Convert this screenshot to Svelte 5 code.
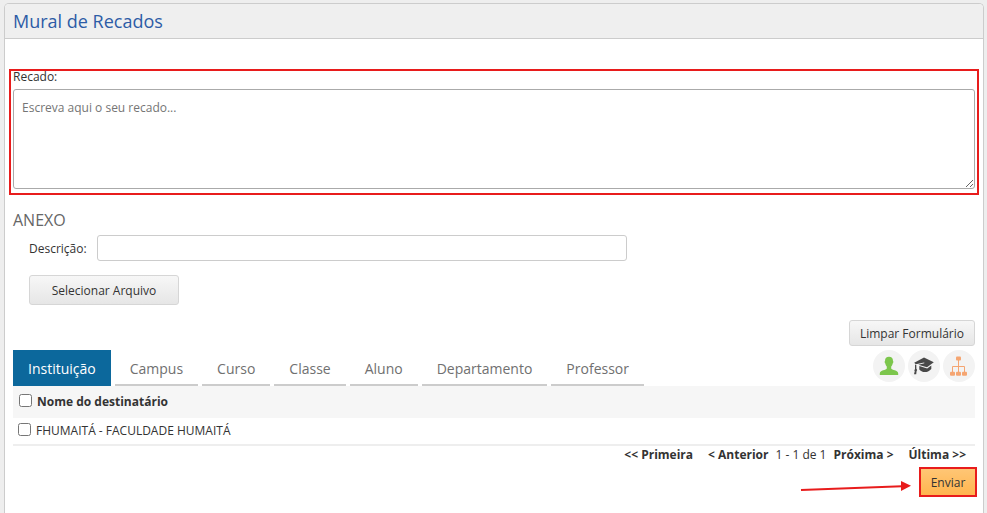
<script lang="ts">
  const tabs = ['Instituição', 'Campus', 'Curso', 'Classe', 'Aluno', 'Departamento', 'Professor'];
  const recipients = ['FHUMAITÁ - FACULDADE HUMAITÁ'];

  let active = $state('Instituição');
  let message = $state('');
  let description = $state('');
  let selected = $state<string[]>([]);

  let allSelected = $derived(selected.length === recipients.length);

  function toggleAll() {
    selected = allSelected ? [] : [...recipients];
  }

  function clearForm() {
    message = '';
    description = '';
    selected = [];
  }
</script>

<main>
  <section class="panel">
    <header>
      <h1>Mural de Recados</h1>
    </header>

    <div class="content">
      <div class="message">
        <label for="message">Recado:</label>
        <textarea id="message" placeholder="Escreva aqui o seu recado..." bind:value={message}></textarea>
      </div>

      <h2>ANEXO</h2>
      <div class="attachment">
        <div class="description">
          <label for="description">Descrição:</label>
          <input type="text" id="description" bind:value={description} />
        </div>
        <button type="button" class="btn file">Selecionar Arquivo</button>
      </div>

      <div class="actions">
        <button type="button" class="btn" onclick={clearForm}>Limpar Formulário</button>
      </div>

      <div class="toolbar">
        <nav class="tabs">
          {#each tabs as tab}
            <button type="button" class="tab" class:active={active === tab} onclick={() => (active = tab)}>{tab}</button>
          {/each}
        </nav>
        <div class="shortcuts">
          <button type="button" class="round" aria-label="Alunos">
            <svg width="32" height="32" viewBox="0 0 32 32" fill="#7cc64c">
              <path d="M12 11c0-2.800 1.500-4.200 4-4.200s4 1.400 4 4.200c.5.200.5 1.600-.2 2.200-.3 1.600-1 2.500-1.600 3.200v2.200c.4 1.500 7 1.800 7 4.800v1.600H6.800v-1.600c0-3 6.600-3.300 7-4.800v-2.200c-.6-.7-1.300-1.600-1.600-3.200-.7-.6-.7-2-.2-2.200z" />
            </svg>
          </button>
          <button type="button" class="round" aria-label="Professores">
            <svg width="32" height="32" viewBox="0 0 32 32" fill="#484848">
              <path d="M16 7.600 25.800 12.300 19 17.300 10.300 14.700 16.400 13.200 16.200 12.400 7.800 14.300 6.200 12.800z" />
              <path d="M11.300 15.900l7.900 2.500 4.100-3v3.500c-2.600 2.500-4.400 3.300-6.500 3.200-2.400-.1-4.300-1-5.500-2.600z" />
              <path d="M7 14.400l1.300.5.100 4.200c1 .6.900 1.600.2 2l-.4 3.100H6l.8-3.100c-.7-.6-.5-1.400.2-1.900z" />
            </svg>
          </button>
          <button type="button" class="round" aria-label="Departamentos">
            <svg width="32" height="32" viewBox="0 0 32 32" fill="#f5a571">
              <path d="M9.500 22v-5.500h12v5.500M15.500 9v13" fill="none" stroke="#f5a571" />
              <rect x="13" y="6.500" width="5" height="4" rx="1" />
              <rect x="7" y="21.800" width="5" height="4" rx="1" />
              <rect x="13" y="21.800" width="5" height="4" rx="1" />
              <rect x="19" y="21.800" width="5" height="4" rx="1" />
            </svg>
          </button>
        </div>
      </div>

      <table>
        <thead>
          <tr>
            <th>
              <label>
                <input type="checkbox" checked={allSelected} onchange={toggleAll} />
                Nome do destinatário
              </label>
            </th>
          </tr>
        </thead>
        <tbody>
          {#each recipients as recipient}
            <tr>
              <td>
                <label>
                  <input type="checkbox" value={recipient} bind:group={selected} />
                  {recipient}
                </label>
              </td>
            </tr>
          {/each}
        </tbody>
      </table>

      <nav class="pager">
        <a href="#primeira" class="edge">&lt;&lt; Primeira</a>
        <a href="#anterior">&lt; Anterior</a>
        <span>1 - 1 de 1</span>
        <a href="#proxima">Próxima &gt;</a>
        <a href="#ultima" class="last">Última &gt;&gt;</a>
      </nav>

      <div class="submit">
        <svg class="arrow" width="112" height="22" viewBox="0 0 112 22" aria-hidden="true">
          <path d="M1 19 102 15.200" stroke="#e81c1c" stroke-width="2" fill="none" />
          <path d="M101 10 111 14.700 101 20z" fill="#e81c1c" />
        </svg>
        <button type="submit" class="send">Enviar</button>
      </div>
    </div>
  </section>
</main>

<style>
  :global(body) {
    margin: 0;
    background: #eee;
    color: #333;
    font: 12px/16px "Segoe UI", "Open Sans", "Noto Sans", sans-serif;
  }

  main {
    display: flex;
    box-sizing: border-box;
    min-height: 100vh;
    padding: 3px 3px 0 4px;
  }

  .panel {
    flex: 1;
    border: 1px solid #ccc;
    border-bottom: none;
    border-radius: 5px 5px 0 0;
    background: #fff;
  }

  header {
    padding: 0 8px;
    border-bottom: 1px solid #ccc;
    border-radius: 4px 4px 0 0;
    background: #efefef;
  }

  h1 {
    margin: 0;
    color: #2d5ca6;
    font-size: 18px;
    font-weight: 400;
    line-height: 34px;
  }

  .content {
    padding: 30px 8px 16px;
  }

  button,
  input,
  textarea {
    box-sizing: border-box;
    color: inherit;
    font: inherit;
  }

  button {
    cursor: pointer;
  }

  .message {
    position: relative;
  }

  .message::after {
    position: absolute;
    inset: 0 -4px -6px;
    border: 2px solid #e81c1c;
    content: '';
    pointer-events: none;
  }

  .message label {
    display: block;
    margin-bottom: 4px;
  }

  textarea {
    display: block;
    width: 100%;
    height: 100px;
    padding: 10px 8px;
    border: 1px solid #aaa;
    border-radius: 3px;
  }

  textarea::placeholder {
    color: #757575;
  }

  h2 {
    margin: 21px 0 5px;
    color: #666;
    font-size: 16px;
    font-weight: 400;
    line-height: 20px;
  }

  .attachment {
    padding-left: 16px;
  }

  .description {
    display: flex;
    align-items: center;
    margin-bottom: 14px;
  }

  .description label {
    width: 68px;
    padding-top: 2px;
  }

  .description input {
    width: 530px;
    height: 26px;
    border: 1px solid #ccc;
    border-radius: 3px;
  }

  .btn {
    height: 26px;
    padding: 2px 10px 0;
    border: 1px solid #d6d6d6;
    border-radius: 3px;
    background: linear-gradient(#f7f7f7, #e6e6e6);
  }

  .file {
    width: 150px;
    height: 30px;
  }

  .actions {
    display: flex;
    justify-content: flex-end;
    margin: 15px 0 4px;
  }

  .toolbar {
    display: flex;
    justify-content: space-between;
  }

  .tabs {
    display: flex;
    gap: 4px;
  }

  .tab {
    height: 36px;
    padding: 3px 15px 0;
    border: none;
    border-bottom: 2px solid #ccc;
    background: none;
    color: #707070;
    font-size: 14px;
  }

  .tab.active {
    border-color: #0c689c;
    background: #0c689c;
    color: #fff;
  }

  .shortcuts {
    display: flex;
    gap: 3px;
  }

  .round {
    width: 32px;
    height: 32px;
    padding: 0;
    border: none;
    border-radius: 50%;
    background: #f3f3f3;
  }

  .round svg {
    display: block;
  }

  table {
    width: 100%;
    border-collapse: collapse;
  }

  th,
  td {
    padding: 0 5px;
    text-align: left;
  }

  th {
    height: 32px;
    padding: 0 6px;
    background: #f6f6f6;
  }

  td {
    height: 26px;
    border-bottom: 2px solid #eee;
  }

  th label,
  td label {
    display: flex;
    align-items: flex-start;
    gap: 5px;
  }

  table input {
    width: 13px;
    height: 13px;
    margin: 0;
  }

  .pager {
    display: flex;
    justify-content: flex-end;
    gap: 7px;
    padding: 1px 9px 0 0;
  }

  .pager a {
    color: #333;
    font-weight: 700;
    text-decoration: none;
  }

  .edge {
    margin-right: 8px;
  }

  .last {
    margin-left: 8px;
  }

  .submit {
    display: flex;
    align-items: center;
    justify-content: flex-end;
    gap: 7px;
    margin: 4px -2px 0 0;
  }

  .send {
    width: 58px;
    height: 30px;
    padding: 2px 0 0;
    border: 2px solid #e81c1c;
    background: linear-gradient(#ffc675, #ffb54f);
  }
</style>
